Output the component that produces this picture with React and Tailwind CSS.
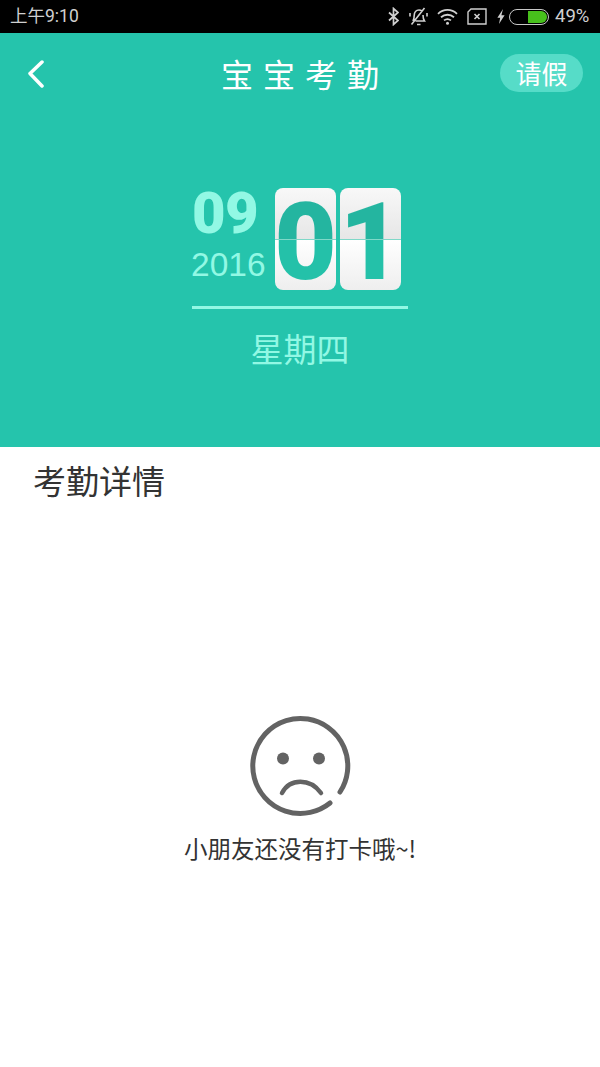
const CJK = 'font-["Noto_Sans_CJK_SC",sans-serif]';

// Status bar icons
const StatusIcons = () => (
  <div className="flex items-center text-[#d0d0d0]">
    <svg width="11" height="19" viewBox="0 0 11 19" fill="none" stroke="currentColor" strokeWidth="1.700" className="mr-[10px]">
      <path d="M1 5.500l9 8-4.500 4V1.500l4.500 4-9 8" />
    </svg>
    <svg width="19" height="20" viewBox="0 0 19 20" fill="none" stroke="currentColor" strokeWidth="1.600" className="mr-[9px]">
      <path d="M4 14c1-2 1.200-3.500 1.200-5.500C5.200 5 7.200 3 10 3c1.200 0 2.200.4 3 1M14 8c0 2.500.5 4.500 1.500 6H6.500M8 17.500h3.500M2.500 17.500L15.500 1" />
      <path d="M1 6v3.500M18 6v3.500" />
    </svg>
    <svg width="21" height="17" viewBox="0 0 21 17" fill="none" stroke="currentColor" strokeWidth="1.800" className="mr-[9px]">
      <path d="M1 5.800c5.500-5.200 13.500-5.200 19 0M4 9.200c3.800-3.300 9.200-3.300 13 0M7 12.400c2-1.500 5-1.500 7 0" />
      <circle cx="10.500" cy="15.300" r="1.500" fill="currentColor" stroke="none" />
    </svg>
    <svg width="20" height="17" viewBox="0 0 20 17" fill="none" stroke="currentColor" strokeWidth="1.400" className="mr-[10px]">
      <path d="M4 1h15v15H1V4z" />
      <path d="M7.500 6l5 5M12.500 6l-5 5" strokeWidth="1.600" />
    </svg>
    <svg width="8" height="19" viewBox="0 0 10 19" fill="currentColor" className="mr-[4px]">
      <path d="M7.500 0L.5 11h3.500L2.500 19 9.500 8H5.500z" />
    </svg>
    <div className="flex h-[16px] w-[40px] justify-end rounded-full border border-[#c8c8c8] p-[1px]">
      <div className="h-full w-[19px] rounded-r-full rounded-l-[2px] bg-[#47c01c]" />
    </div>
    <span className='ml-[6px] w-[34px] font-["Roboto",sans-serif] text-[18.500px] leading-none'>49%</span>
  </div>
);

const FlipCard = ({ digit }) => (
  <div className='relative flex h-[102px] w-[61px] items-center justify-center rounded-[8px] bg-[linear-gradient(180deg,#f8f8f8_0%,#e6e6e6_51%,#ffffff_51%,#eeeeee_100%)]'>
    <span className='mt-[6px] block bg-[linear-gradient(180deg,#24b5a0_0%,#24b5a0_47%,#24c1a9_47%,#24c1a9_100%)] bg-clip-text font-["Roboto",sans-serif] text-[108px] leading-[96px] font-black text-transparent'>{digit}</span>
    <div className="absolute top-[51px] right-0 left-0 h-px bg-[#7fd8c8]" />
  </div>
);

const SadFace = () => (
  <svg width="104" height="104" viewBox="0 0 104 104" fill="none" stroke="#636363" strokeLinecap="round">
    <path d="M82 89A47.500 47.500 0 1 1 92 78" strokeWidth="5" />
    <circle cx="35" cy="44.500" r="6" fill="#636363" stroke="none" />
    <circle cx="71" cy="44.500" r="6" fill="#636363" stroke="none" />
    <path d="M34 79C42 64 62 64 73 79" strokeWidth="4.500" />
  </svg>
);

export default function App() {
  return (
    <div className={`flex h-[1067px] w-[600px] flex-col overflow-hidden bg-white ${CJK}`}>
      {/* Status bar */}
      <div className="flex h-[33px] shrink-0 items-center justify-between bg-black pr-[11px] pl-[10px]">
        <span className='text-[17.500px] leading-none text-[#d0d0d0] font-["Roboto","Noto_Sans_CJK_SC",sans-serif]'>上午9:10</span>
        <StatusIcons />
      </div>

      {/* Green header */}
      <div className="flex h-[414px] shrink-0 flex-col bg-[#25c4ac]">
        <div className="relative flex h-[80px] items-center justify-center">
          <svg width="20" height="28" viewBox="0 0 20 28" fill="none" stroke="#ffffff" strokeWidth="3.500" strokeLinecap="round" strokeLinejoin="round" className="absolute top-[27px] left-[26px]">
            <path d="M16 2L4 13.500 16 26" />
          </svg>
          <span className="text-[32px] leading-none tracking-[10px] text-white pl-[10px]">宝宝考勤</span>
          <div className="absolute top-[21px] right-[17px] flex h-[38px] w-[83px] items-center justify-center rounded-full bg-[#56dcc8] text-[26px] leading-none text-white">
            请假
          </div>
        </div>

        <div className="mt-[75px] flex flex-col items-center">
          <div className="flex w-[216px]">
            <div className='flex w-[83px] flex-col font-["Roboto",sans-serif] text-[#92f8e4]'>
              <span className="text-[58px] leading-[50px] font-black tracking-[-0.5px]">09</span>
              <span className='mt-[7px] font-["Liberation_Sans",sans-serif] text-[33.500px] leading-[40px] -ml-[1px]'>2016</span>
            </div>
            <div className="flex gap-[4px]">
              <FlipCard digit="0" />
              <FlipCard digit="1" />
            </div>
          </div>
          <div className="mt-[16px] h-[3px] w-[216px] bg-[#92f8e4]" />
          <div className="mt-[17px] text-[33px] leading-[44px] text-[#92f8e4]">星期四</div>
        </div>
      </div>

      {/* Details */}
      <div className="flex flex-1 flex-col bg-white">
        <div className="mt-[13px] pl-[33px] text-[33px] leading-[40px] text-[#333333]">考勤详情</div>
        <div className="mt-[214px] flex flex-col items-center">
          <SadFace />
          <div className="mt-[15px] text-[23.500px] leading-[30px] text-[#333333]">小朋友还没有打卡哦~!</div>
        </div>
      </div>
    </div>
  );
}
